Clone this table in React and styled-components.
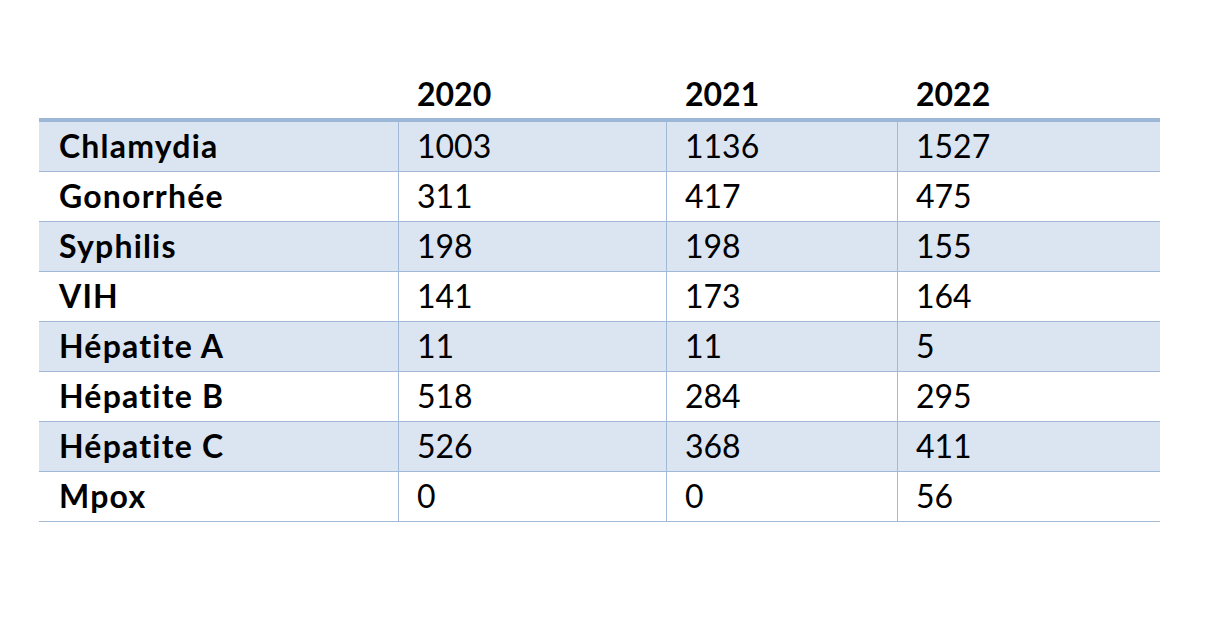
import React from "react";
import styled, { createGlobalStyle } from "styled-components";

const Global = createGlobalStyle`
  html, body {
    margin: 0;
    background: #ffffff;
  }
  body {
    font-family: Lato, "Liberation Sans", sans-serif;
    color: #000000;
  }
`;

const Page = styled.div`
  width: 1224px;
  height: 621px;
  padding: 70px 0 0 39px;
  box-sizing: border-box;
`;

const Table = styled.div`
  width: 1121px;
  display: flex;
  flex-direction: column;
`;

const Row = styled.div`
  display: grid;
  grid-template-columns: 359px 268px 231px 263px;
  height: ${(props) => (props.head ? "52px" : "50px")};
  box-sizing: border-box;
  background: ${(props) => (props.shade ? "#dbe5f1" : "#ffffff")};
  border-bottom: ${(props) =>
    props.head ? "4px solid #9db7d7" : "1px solid #a2bad8"};
`;

const Cell = styled.div`
  display: flex;
  align-items: center;
  padding-left: ${(props) => (props.first ? "19px" : "18px")};
  padding-bottom: 2px;
  box-sizing: border-box;
  font-size: 32px;
  font-weight: ${(props) => (props.bold ? 700 : 400)};
  letter-spacing: ${(props) => (props.first ? "1.2px" : "0")};
  border-left: ${(props) =>
    props.line ? "1px solid #a2bad8" : "1px solid transparent"};
  white-space: nowrap;
`;

const years = ["2020", "2021", "2022"];

const data = [
  ["Chlamydia", "1003", "1136", "1527"],
  ["Gonorrhée", "311", "417", "475"],
  ["Syphilis", "198", "198", "155"],
  ["VIH", "141", "173", "164"],
  ["Hépatite A", "11", "11", "5"],
  ["Hépatite B", "518", "284", "295"],
  ["Hépatite C", "526", "368", "411"],
  ["Mpox", "0", "0", "56"],
];

export default function App() {
  return (
    <>
      <Global />
      <Page>
        <Table>
          <Row head>
            <Cell first />
            {years.map((y) => (
              <Cell key={y} bold>
                {y}
              </Cell>
            ))}
          </Row>
          {data.map(([name, ...values], i) => (
            <Row key={name} shade={i % 2 === 0}>
              <Cell first bold>
                {name}
              </Cell>
              {values.map((v, j) => (
                <Cell key={j} line>
                  {v}
                </Cell>
              ))}
            </Row>
          ))}
        </Table>
      </Page>
    </>
  );
}
